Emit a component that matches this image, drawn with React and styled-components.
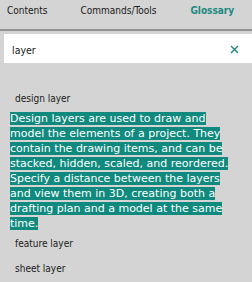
import styled, { createGlobalStyle } from "styled-components";

const GlobalStyle = createGlobalStyle`
    html, body {
        margin: 0;
        padding: 0;
        background: #d4d4d4;
    }
`;

const Wrapper = styled.div`
    width: 252px;
    height: 282px;
    overflow: hidden;
    background: #d4d4d4;
    font-family: "DejaVu Sans Condensed", "DejaVu Sans", sans-serif;
    color: #1a1a1a;
`;

const TabBar = styled.div`
    display: flex;
    height: 29px;
    align-items: center;
    border-bottom: 2px solid #939393;
`;

const Tab = styled.div`
    font-size: 10px;
    padding-bottom: 9px;
    margin-left: ${(p) => p.left}px;
    color: ${(p) => (p.active ? "#1b8a7e" : "#1a1a1a")};
    font-weight: ${(p) => (p.active ? "bold" : "normal")};
`;

const SearchBox = styled.div`
    display: flex;
    align-items: center;
    justify-content: space-between;
    height: 29px;
    margin: 3px 0 0 4px;
    padding: 2px 13px 0 8px;
    box-sizing: border-box;
    background: #ffffff;
    font-size: 10.5px;
`;

const Clear = styled.span`
    display: flex;
    color: #1b8a7e;
`;

const Item = styled.div`
    font-size: 10px;
    padding-left: 15px;
    margin-top: ${(p) => p.top || 0}px;
    height: ${(p) => p.h}px;
    display: flex;
    align-items: center;
`;

const Desc = styled.div`
    padding: 0 10px 0 10px;
    font-family: "DejaVu Sans", sans-serif;
    font-size: 11px;
    line-height: 15px;
    color: #ffffff;
`;

const Mark = styled.span`
    background: #108a7e;
`;

function App() {
    return (
        <Wrapper>
            <GlobalStyle />
            <TabBar>
                <Tab left={7}>Contents</Tab>
                <Tab left={33}>Commands/Tools</Tab>
                <Tab left={34} active>Glossary</Tab>
            </TabBar>
            <SearchBox>
                <span>layer</span>
                <Clear>
                    <svg width="9" height="9" viewBox="0 0 9 9">
                        <path d="M1 1 L8 8 M8 1 L1 8" stroke="#1b8a7e" strokeWidth="1.4" fill="none" />
                    </svg>
                </Clear>
            </SearchBox>
            <Item top={22} h={26}>design layer</Item>
            <Desc>
                <Mark>
                    Design layers are used to draw and model the elements of a project. They contain the
                    drawing items, and can be stacked, hidden, scaled, and reordered. Specify a distance
                    between the layers and view them in 3D, creating both a drafting plan and a model at
                    the same time.
                </Mark>
            </Desc>
            <Item h={24}>feature layer</Item>
            <Item h={26}>sheet layer</Item>
        </Wrapper>
    );
}

export default App;
